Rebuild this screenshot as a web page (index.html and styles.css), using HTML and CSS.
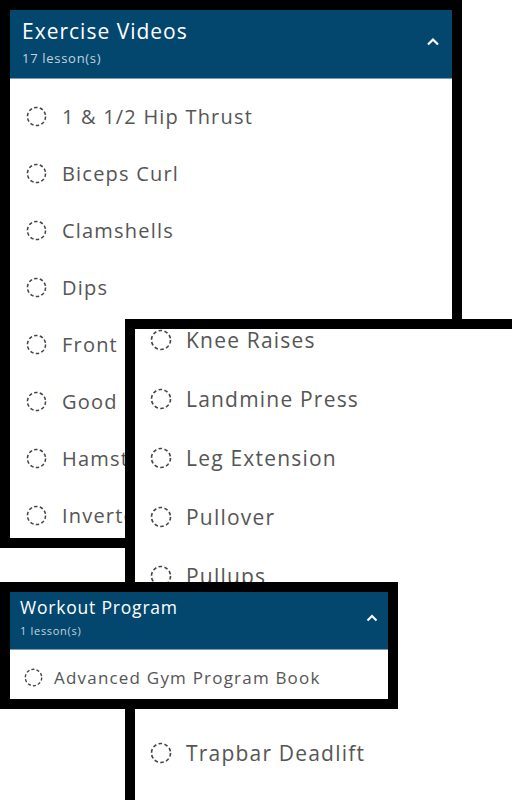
FILE: index.html
```html
<!DOCTYPE html>
<html>
<head>
<meta charset="utf-8">
<link rel="stylesheet" href="styles.css">
</head>
<body>
<div class="shot shot-a">
  <div class="head">
    <div class="head-text">
      <div class="title">Exercise Videos</div>
      <div class="sub">17 lesson(s)</div>
    </div>
    <svg class="chev" width="14" height="9" viewBox="0 0 14 9"><path d="M2 7.5 L7 2.5 L12 7.5" fill="none" stroke="#fff" stroke-width="2.2"/></svg>
  </div>
  <ul class="list">
    <li><svg class="ring" viewBox="0 0 22 22"><circle cx="11" cy="11" r="9.5"/></svg><span>1 &amp; 1/2 Hip Thrust</span></li>
    <li><svg class="ring" viewBox="0 0 22 22"><circle cx="11" cy="11" r="9.5"/></svg><span>Biceps Curl</span></li>
    <li><svg class="ring" viewBox="0 0 22 22"><circle cx="11" cy="11" r="9.5"/></svg><span>Clamshells</span></li>
    <li><svg class="ring" viewBox="0 0 22 22"><circle cx="11" cy="11" r="9.5"/></svg><span>Dips</span></li>
    <li class="cut"><svg class="ring" viewBox="0 0 22 22"><circle cx="11" cy="11" r="9.5"/></svg><span>Front Squat</span></li>
    <li class="cut"><svg class="ring" viewBox="0 0 22 22"><circle cx="11" cy="11" r="9.5"/></svg><span>Good Mornings</span></li>
    <li class="cut"><svg class="ring" viewBox="0 0 22 22"><circle cx="11" cy="11" r="9.5"/></svg><span>Hamstring Curl</span></li>
    <li class="cut"><svg class="ring" viewBox="0 0 22 22"><circle cx="11" cy="11" r="9.5"/></svg><span>Inverted Row</span></li>
  </ul>
</div>

<div class="shot shot-b">
  <ul class="list">
    <li><svg class="ring" viewBox="0 0 22 22"><circle cx="11" cy="11" r="9.5"/></svg><span>Knee Raises</span></li>
    <li><svg class="ring" viewBox="0 0 22 22"><circle cx="11" cy="11" r="9.5"/></svg><span>Landmine Press</span></li>
    <li><svg class="ring" viewBox="0 0 22 22"><circle cx="11" cy="11" r="9.5"/></svg><span>Leg Extension</span></li>
    <li><svg class="ring" viewBox="0 0 22 22"><circle cx="11" cy="11" r="9.5"/></svg><span>Pullover</span></li>
    <li><svg class="ring" viewBox="0 0 22 22"><circle cx="11" cy="11" r="9.5"/></svg><span>Pullups</span></li>
    <li class="hidden-row"></li>
    <li class="hidden-row"></li>
    <li><svg class="ring" viewBox="0 0 22 22"><circle cx="11" cy="11" r="9.5"/></svg><span>Trapbar Deadlift</span></li>
  </ul>
</div>

<div class="shot shot-c">
  <div class="head">
    <div class="head-text">
      <div class="title">Workout Program</div>
      <div class="sub">1 lesson(s)</div>
    </div>
    <svg class="chev" width="12" height="8" viewBox="0 0 12 8"><path d="M1.5 6.5 L6 2 L10.5 6.5" fill="none" stroke="#fff" stroke-width="2"/></svg>
  </div>
  <ul class="list">
    <li><svg class="ring" viewBox="0 0 22 22"><circle cx="11" cy="11" r="9.5"/></svg><span>Advanced Gym Program Book</span></li>
  </ul>
</div>
</body>
</html>
```
FILE: styles.css
```css
html, body {
  margin: 0;
  padding: 0;
  background: #fff;
}
body {
  width: 512px;
  height: 800px;
  position: relative;
  overflow: hidden;
  font-family: "Open Sans", "Noto Sans", sans-serif;
}
.shot {
  position: absolute;
  background: #fff;
  border: 10px solid #000;
  overflow: hidden;
  box-sizing: border-box;
}
.shot-a {
  left: 0;
  top: 0;
  width: 462px;
  height: 548px;
  z-index: 1;
}
.shot-b {
  left: 125px;
  top: 319px;
  width: 387px;
  height: 481px;
  border-right: 0;
  border-bottom: 0;
  z-index: 2;
}
.shot-c {
  left: 0;
  top: 582px;
  width: 398px;
  height: 127px;
  z-index: 3;
}
.head {
  background: #03476e;
  display: flex;
  align-items: center;
  justify-content: space-between;
  box-sizing: border-box;
  border-bottom: 1px solid #7d9db3;
}
.title {
  color: #fff;
}
.sub {
  color: #c3d3df;
}
.list {
  list-style: none;
  margin: 0;
  padding: 0;
}
.list li {
  display: flex;
  align-items: center;
  color: #555;
  white-space: nowrap;
  letter-spacing: 1.2px;
}
.ring {
  flex: none;
  fill: none;
  stroke: #444;
  stroke-width: 1.6;
  stroke-dasharray: 3.6 2.4;
}

/* panel A */
.shot-a .head {
  height: 69px;
  padding: 0 12px 0 12px;
}
.shot-a .title {
  font-size: 21px;
  line-height: 26px;
  letter-spacing: 1px;
  margin-top: -4px;
}
.shot-a .sub {
  font-size: 13px;
  line-height: 16px;
  letter-spacing: 0.7px;
  margin-top: 6px;
}
.shot-a .chev {
  margin-top: -6px;
}
.shot-a .list {
  padding-top: 9px;
}
.shot-a .list li {
  height: 57px;
  padding-left: 16px;
  gap: 15px;
  font-size: 20px;
}
.shot-a .list li.cut span {
  width: 64px;
  overflow: hidden;
}
.shot-a .ring {
  width: 21px;
  height: 21px;
}

/* panel B */
.shot-b .list {
  margin-top: -19px;
}
.shot-b .list li {
  height: 59px;
  padding-left: 15px;
  gap: 14px;
  font-size: 21px;
}
.shot-b .ring {
  width: 22px;
  height: 22px;
}

/* panel C */
.shot-c .head {
  height: 58px;
  padding: 0 10px 0 10px;
}
.shot-c .title {
  font-size: 17.5px;
  line-height: 22px;
  letter-spacing: 0.8px;
  margin-top: -8px;
}
.shot-c .sub {
  font-size: 11px;
  line-height: 14px;
  letter-spacing: 0.7px;
  margin-top: 6px;
}
.shot-c .chev {
  margin-top: -6px;
}
.shot-c .list li {
  height: 50px;
  padding-left: 14px;
  padding-top: 2px;
  gap: 11px;
  font-size: 17px;
}
.shot-c .ring {
  width: 19px;
  height: 19px;
}
```
